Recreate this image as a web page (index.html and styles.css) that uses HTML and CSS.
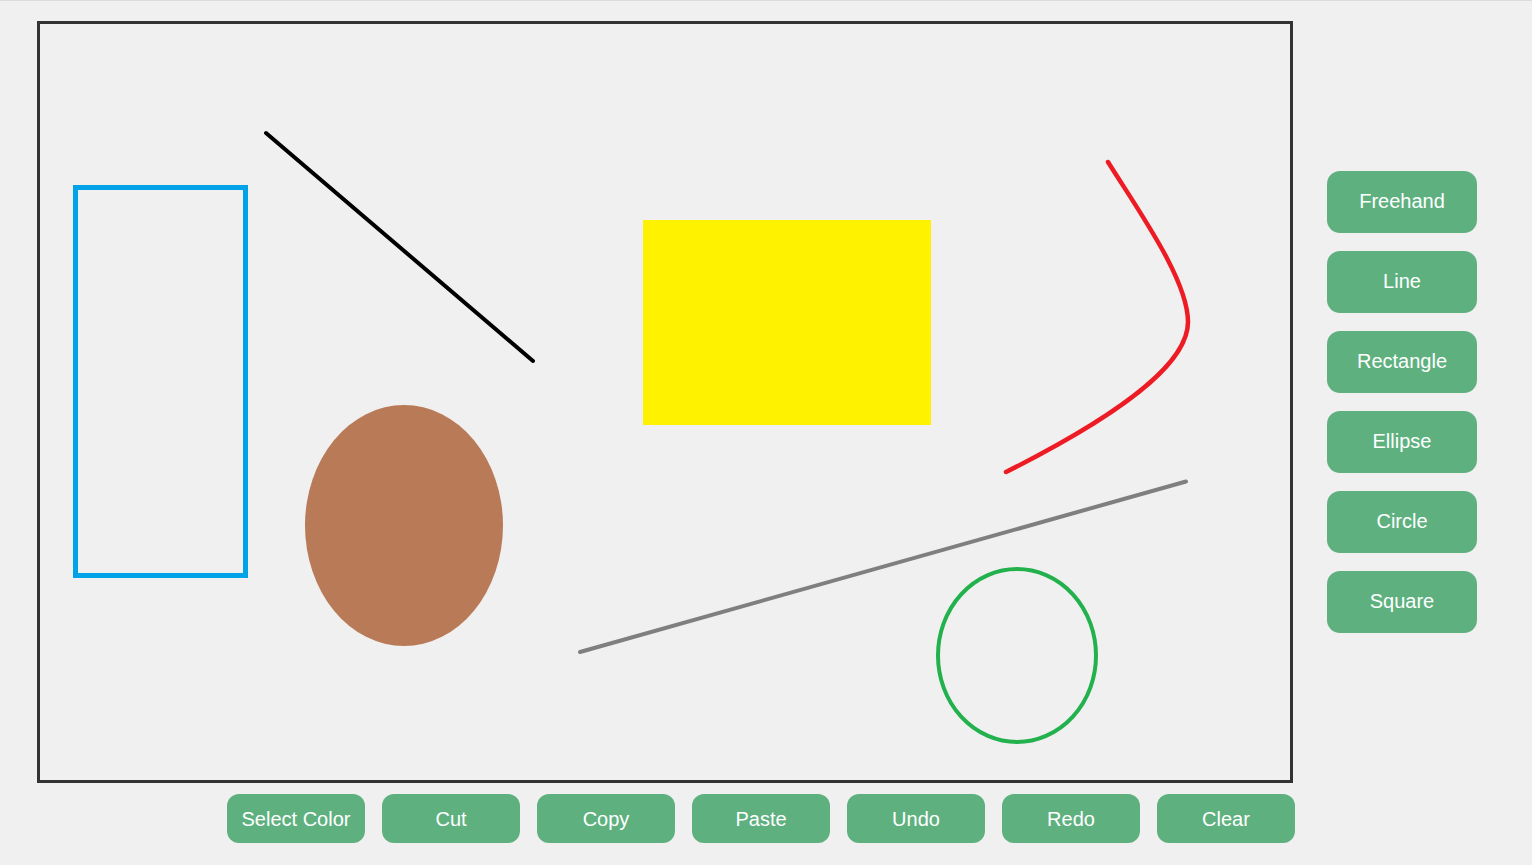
FILE: index.html
```html
<!DOCTYPE html>
<html>
<head>
<meta charset="utf-8">
<title>Paint</title>
<link rel="stylesheet" href="styles.css">
</head>
<body>
<div class="app">
  <div class="workspace">
    <div class="canvas">
      <svg class="drawing" width="1250" height="756" viewBox="40 24 1250 756" xmlns="http://www.w3.org/2000/svg">
        <rect x="75.5" y="187.5" width="170" height="388" fill="none" stroke="#00a2e8" stroke-width="5"/>
        <line x1="266" y1="133" x2="533" y2="361" stroke="#000" stroke-width="4" stroke-linecap="round"/>
        <rect x="643" y="220" width="288" height="205" fill="#fff200"/>
        <ellipse cx="404" cy="525.5" rx="99" ry="120.5" fill="#b97a57"/>
        <path d="M1108 162 C1140 213, 1188 280, 1188 322 C1188 355, 1147 401, 1006 472" fill="none" stroke="#ed1c24" stroke-width="4.5" stroke-linecap="round"/>
        <line x1="580" y1="652" x2="1186" y2="481.5" stroke="#7f7f7f" stroke-width="4" stroke-linecap="round"/>
        <ellipse cx="1017" cy="655.5" rx="79" ry="86.5" fill="none" stroke="#22b14c" stroke-width="4"/>
      </svg>
    </div>
    <div class="tools">
      <button class="btn tool">Freehand</button>
      <button class="btn tool">Line</button>
      <button class="btn tool">Rectangle</button>
      <button class="btn tool">Ellipse</button>
      <button class="btn tool">Circle</button>
      <button class="btn tool">Square</button>
    </div>
  </div>
  <div class="actions">
    <button class="btn action">Select Color</button>
    <button class="btn action">Cut</button>
    <button class="btn action">Copy</button>
    <button class="btn action">Paste</button>
    <button class="btn action">Undo</button>
    <button class="btn action">Redo</button>
    <button class="btn action">Clear</button>
  </div>
</div>
</body>
</html>
```

FILE: styles.css
```css
* {
  box-sizing: border-box;
}

html, body {
  margin: 0;
  padding: 0;
  background: #f0f0f0;
  font-family: "Liberation Sans", Arial, sans-serif;
}

body {
  border-top: 1px solid #dcdcdc;
  height: 865px;
  overflow: hidden;
}

.app {
  display: flex;
  flex-direction: column;
  padding-top: 20px;
}

.workspace {
  display: flex;
  align-items: center;
  padding-left: 37px;
}

.canvas {
  width: 1256px;
  height: 762px;
  border: 3px solid #333333;
  flex: none;
}

.drawing {
  display: block;
}

.tools {
  display: flex;
  flex-direction: column;
  gap: 18px;
  margin-left: 34px;
}

.btn {
  background: #5eb17f;
  color: #ffffff;
  border: none;
  font-family: "Liberation Sans", Arial, sans-serif;
  font-size: 20px;
  padding: 0;
  cursor: pointer;
}

.tool {
  width: 150px;
  height: 62px;
  border-radius: 13px;
  padding-bottom: 2px;
}

.actions {
  display: flex;
  gap: 17px;
  margin-top: 11px;
  padding-left: 227px;
}

.action {
  width: 138px;
  height: 49px;
  border-radius: 12px;
  padding-top: 1px;
}
```
